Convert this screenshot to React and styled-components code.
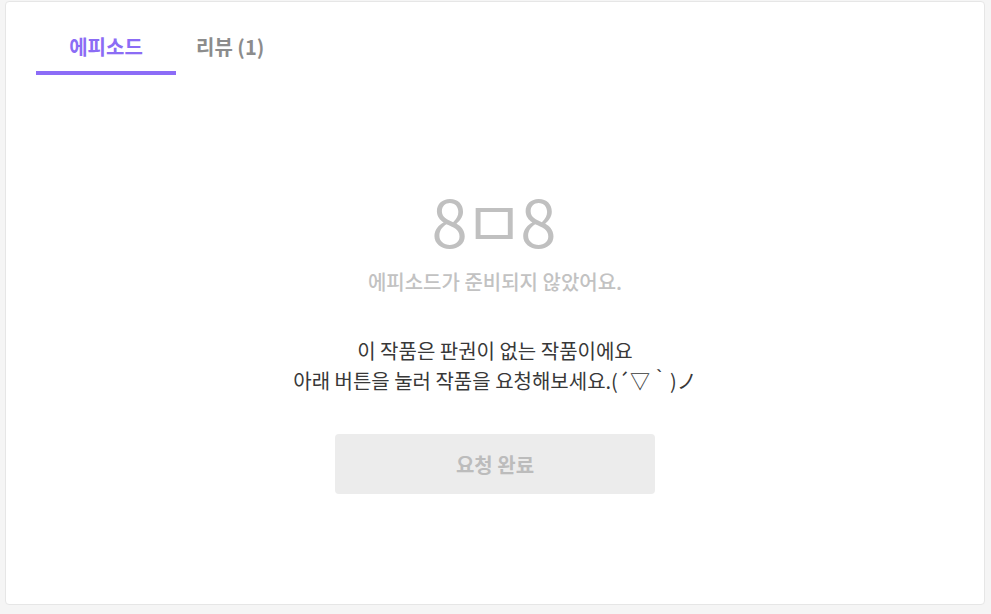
import React from "react"
import styled, { createGlobalStyle } from "styled-components"

const GlobalStyle = createGlobalStyle`
    html, body {
        margin: 0;
        padding: 0;
        background: #f5f5f5;
    }
    body {
        font-family: "Noto Sans CJK KR", "Noto Sans", sans-serif;
    }
`

const Page = styled.div`
    padding: 1px 6px 8px 5px;
    box-sizing: border-box;
    height: 614px;
`

const Card = styled.section`
    background: #fff;
    border: 1px solid #e6e6e6;
    border-radius: 4px;
    height: 604px;
    box-sizing: border-box;
    display: flex;
    flex-direction: column;
`

const Tabs = styled.nav`
    display: flex;
    padding: 27px 0 0 30px;
`

const Tab = styled.button`
    width: ${props => props.width || "auto"};
    height: 46px;
    border: 0;
    background: none;
    padding: 0 20px 6px;
    font: 700 20px "Noto Sans CJK KR", sans-serif;
    line-height: 36px;
    color: ${props => (props.active ? "#8b6cf5" : "#8c8c8c")};
    border-bottom: 4px solid ${props => (props.active ? "#8c6cf7" : "transparent")};
    cursor: pointer;
`

const Empty = styled.div`
    display: flex;
    flex-direction: column;
    align-items: center;
    padding-top: 108px;
`

const Face = styled.div`
    font: 350 66px "Noto Sans CJK KR", sans-serif;
    color: #c0c0c0;
    line-height: 72px;
    letter-spacing: -4px;
    padding-right: 6px;
`

const Caption = styled.p`
    margin: 12px 0 0;
    font: 500 20px "Noto Sans CJK KR", sans-serif;
    line-height: 29px;
    color: #c2c2c2;
`

const Message = styled.p`
    margin: 40px 0 0;
    font: 400 20px "Noto Sans CJK KR", sans-serif;
    color: #383838;
    line-height: 30px;
    text-align: center;
`

const RequestButton = styled.button`
    margin-top: 38px;
    width: 320px;
    height: 60px;
    border: 0;
    border-radius: 4px;
    background: #ececec;
    color: #bcbcbc;
    font: 700 20px "Noto Sans CJK KR", sans-serif;
`

export default function App() {
    return (
        <>
            <GlobalStyle />
            <Page>
                <Card>
                    <Tabs>
                        <Tab active width="140px">에피소드</Tab>
                        <Tab>리뷰 (1)</Tab>
                    </Tabs>
                    <Empty>
                        <Face>8ㅁ8</Face>
                        <Caption>에피소드가 준비되지 않았어요.</Caption>
                        <Message>
                            이 작품은 판권이 없는 작품이에요
                            <br />
                            아래 버튼을 눌러 작품을 요청해보세요.(´▽｀)ノ
                        </Message>
                        <RequestButton disabled>요청 완료</RequestButton>
                    </Empty>
                </Card>
            </Page>
        </>
    )
}
